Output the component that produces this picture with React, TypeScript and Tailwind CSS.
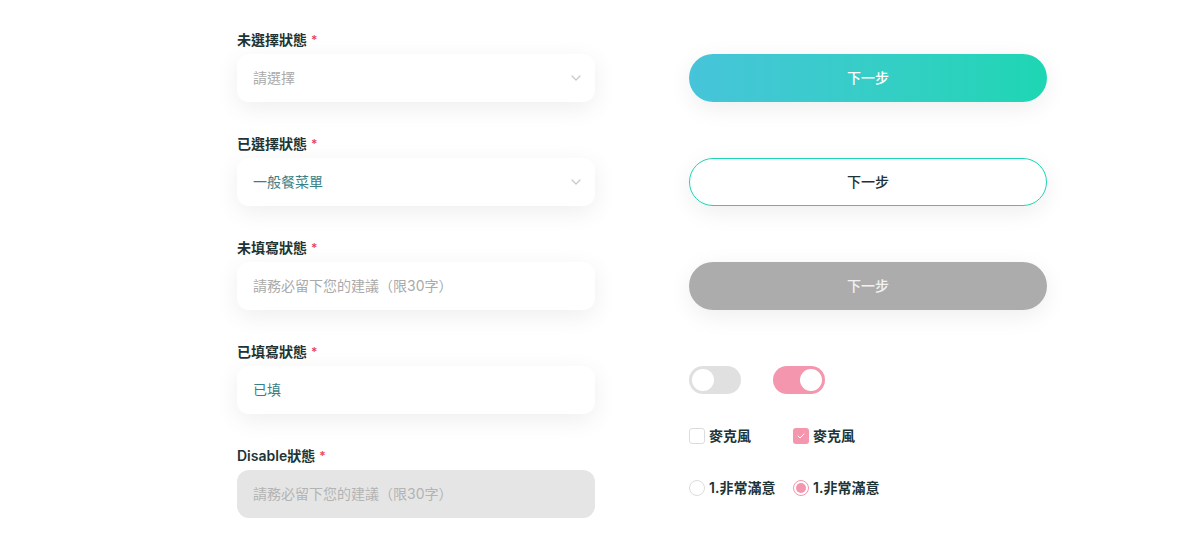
import { useState } from "react";

const font = { fontFamily: 'Inter, "Noto Sans CJK TC", sans-serif' };

function Label({ text }: { text: string }) {
  return (
    <div className="h-5 mb-1 flex items-center text-sm font-semibold text-[#1d3436]">
      {text}
      <span className="ml-1 text-[#e8485a] text-xs">*</span>
    </div>
  );
}

function Chevron() {
  return (
    <svg width="10" height="6" viewBox="0 0 10 6" fill="none">
      <path d="M1 1l4 4 4-4" stroke="#c8c8c8" strokeWidth="1.2" strokeLinecap="round" strokeLinejoin="round" />
    </svg>
  );
}

function Field({ children, disabled }: { children: React.ReactNode; disabled?: boolean }) {
  return (
    <div
      className={`h-12 rounded-xl pl-4 pr-[14px] flex items-center justify-between text-sm ${
        disabled ? "bg-[#e5e5e5]" : "bg-white shadow-[0_6px_24px_rgba(0,0,0,0.07)]"
      }`}
    >
      {children}
    </div>
  );
}

function Toggle({ on }: { on: boolean }) {
  return (
    <div className={`w-[52px] h-7 rounded-full p-[3px] flex ${on ? "bg-[#f496ae] justify-end" : "bg-[#e0e0e0] justify-start"}`}>
      <div className="w-[22px] h-[22px] rounded-full bg-white" />
    </div>
  );
}

export default function App() {
  const [a, setA] = useState(false);
  const [b, setB] = useState(true);

  return (
    <div style={font} className="w-[1200px] h-[548px] bg-white pl-[237px] pt-[30px] flex gap-[94px]">
      <div className="w-[358px] flex flex-col gap-8">
        <div>
          <Label text="未選擇狀態" />
          <Field>
            <span className="text-[#aaaaaa]">請選擇</span>
            <Chevron />
          </Field>
        </div>
        <div>
          <Label text="已選擇狀態" />
          <Field>
            <span className="text-[#3a7f86]">一般餐菜單</span>
            <Chevron />
          </Field>
        </div>
        <div>
          <Label text="未填寫狀態" />
          <Field>
            <span className="text-[#aaaaaa]">請務必留下您的建議（限30字）</span>
          </Field>
        </div>
        <div>
          <Label text="已填寫狀態" />
          <Field>
            <span className="text-[#3a7f86]">已填</span>
          </Field>
        </div>
        <div>
          <Label text="Disable狀態" />
          <Field disabled>
            <span className="text-[#b3b3b3]">請務必留下您的建議（限30字）</span>
          </Field>
        </div>
      </div>

      <div className="w-[358px] pt-6 flex flex-col">
        <button className="h-12 rounded-full bg-gradient-to-r from-[#46c4da] to-[#1dd6b3] text-white text-sm font-medium shadow-[0_6px_24px_rgba(0,0,0,0.07)]">
          下一步
        </button>
        <button className="mt-14 h-12 rounded-full bg-white border border-[#1dd6b3] text-[#1d3436] text-sm font-medium shadow-[0_6px_24px_rgba(0,0,0,0.07)]">
          下一步
        </button>
        <button className="mt-14 h-12 rounded-full bg-[#acacac] text-[#f2f2f2] text-sm font-medium shadow-[0_6px_24px_rgba(0,0,0,0.07)]">
          下一步
        </button>

        <div className="mt-14 flex gap-8">
          <button onClick={() => setA(!a)}><Toggle on={a} /></button>
          <button onClick={() => setB(!b)}><Toggle on={b} /></button>
        </div>

        <div className="mt-8 flex text-sm font-semibold text-[#1d3436]">
          <div className="w-[104px] flex items-center gap-1">
            <span className="w-4 h-4 rounded-[3px] border border-[#dcdcdc] bg-white" />
            麥克風
          </div>
          <div className="flex items-center gap-1">
            <span className="w-4 h-4 rounded-[3px] bg-[#f496ae] flex items-center justify-center">
              <svg width="8" height="6" viewBox="0 0 8 6" fill="none">
                <path d="M1 3l2 2 4-4" stroke="white" strokeWidth="1" strokeLinecap="round" strokeLinejoin="round" />
              </svg>
            </span>
            麥克風
          </div>
        </div>

        <div className="mt-[32px] flex text-sm font-semibold text-[#1d3436]">
          <div className="w-[104px] flex items-center gap-1">
            <span className="w-4 h-4 rounded-full border border-[#dcdcdc] bg-white" />
            1.非常滿意
          </div>
          <div className="flex items-center gap-1">
            <span className="w-4 h-4 rounded-full border border-[#f496ae] bg-white flex items-center justify-center">
              <span className="w-[10px] h-[10px] rounded-full bg-[#f496ae]" />
            </span>
            1.非常滿意
          </div>
        </div>
      </div>
    </div>
  );
}
